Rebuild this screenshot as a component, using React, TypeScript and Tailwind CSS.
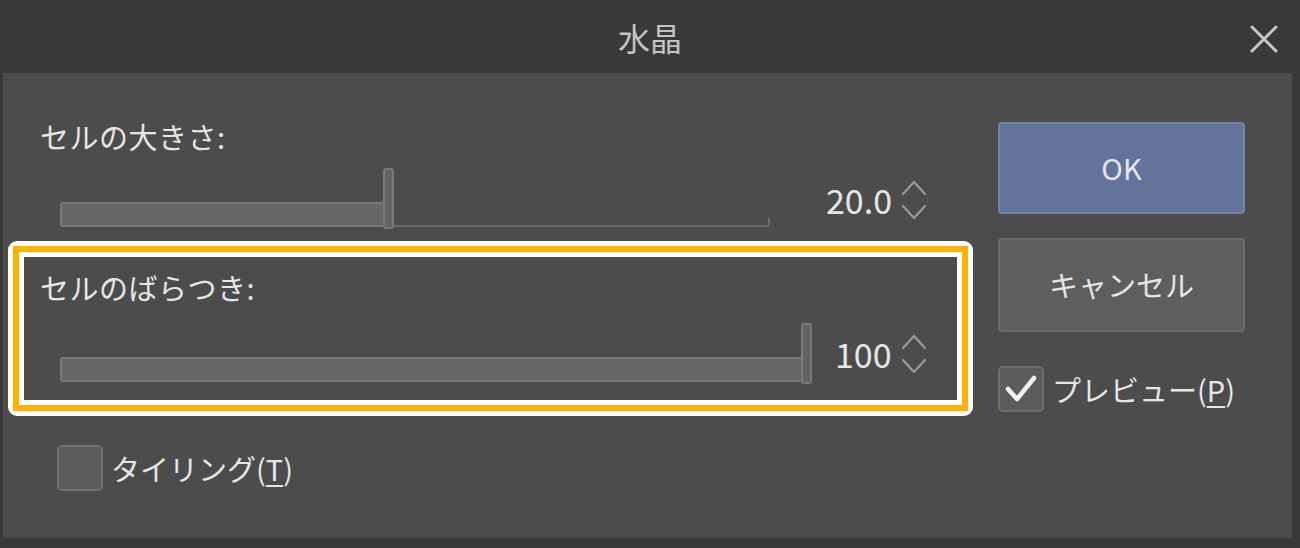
import React from "react";

const font = { fontFamily: '"Noto Sans CJK JP", "Noto Sans", sans-serif' };

function Spinner() {
  return (
    <svg width="26" height="40" viewBox="0 0 26 40" fill="none" stroke="#9a9a9a" strokeWidth={2.2} strokeLinecap="round" strokeLinejoin="round">
      <path d="M2 14 L13 2 L24 14" />
      <path d="M2 26 L13 38 L24 26" />
    </svg>
  );
}

function Slider({ width, fill, full }: { width: number; fill: number; full?: boolean }) {
  return (
    <div className="flex items-end" style={{ width }}>
      <div className="mb-[2px] h-[25px] rounded-l-[3px] border-2 border-r-0 border-[#787878] bg-[#676767]" style={{ width: fill }} />
      <div className="h-[61px] w-[11px] shrink-0 rounded-[3px] border-2 border-[#7a7a7a] bg-[#636363]" />
      {!full && <div className="mb-[2px] h-[9px] flex-1 rounded-br-[3px] border-b-2 border-r-2 border-[#6c6c6c]" />}
    </div>
  );
}

function Check({ checked }: { checked?: boolean }) {
  return (
    <div className="flex h-[46px] w-[46px] shrink-0 items-center justify-center rounded-[5px] border-2 border-[#6f6f6f] bg-[#5c5c5c]">
      {checked && (
        <svg width="34" height="30" viewBox="0 0 34 30" fill="none" stroke="#f2f2f2" strokeWidth={4.5} strokeLinecap="round" strokeLinejoin="round">
          <path d="M4 15 L13 25 L30 4" />
        </svg>
      )}
    </div>
  );
}

export default function App() {
  return (
    <div className="flex h-[548px] w-[1300px] flex-col bg-[#393939] text-[#e6e6e6]" style={font}>
      {/* Title bar */}
      <div className="relative flex h-[73px] items-center justify-center">
        <span className="text-[32px] text-[#c4c4c4]">水晶</span>
        <svg className="absolute left-[1249px] top-[24px]" width="30" height="30" viewBox="0 0 30 30" stroke="#c8c8c8" strokeWidth={3} strokeLinecap="round">
          <path d="M3 3 L27 27 M27 3 L3 27" />
        </svg>
      </div>

      {/* Body */}
      <div className="ml-[3px] flex h-[465px] w-[1289px] bg-[#4c4c4c]">
        {/* Left column */}
        <div className="flex w-[970px] flex-col pl-[5px]">
          {/* Cell size */}
          <div className="pl-[32px] pt-[45px]">
            <div className="text-[29px] leading-[36px] tracking-[0.5px]">セルの大きさ:</div>
            <div className="mt-[14px] flex items-center pl-[20px]">
              <Slider width={710} fill={323} />
              <div className="ml-[56px] flex items-center gap-[9px] pt-[2px]">
                <span className="text-[34px] leading-[40px]">20.0</span>
                <Spinner />
              </div>
            </div>
          </div>

          {/* Highlighted variation */}
          <div className="mt-[12px] h-[175px] w-[965px] rounded-[9px] border-[5px] border-white">
            <div className="h-full w-full border-[6px] border-[#ffb000]">
              <div className="h-full w-full border-[5px] border-white px-[16px] pt-[12px]">
                <div className="text-[29px] leading-[36px] tracking-[0.5px]">セルのばらつき:</div>
                <div className="mt-[18px] flex items-center pl-[20px]">
                  <Slider width={752} fill={741} full />
                  <div className="ml-[23px] flex items-center gap-[9px]">
                    <span className="text-[34px] leading-[40px]">100</span>
                    <Spinner />
                  </div>
                </div>
              </div>
            </div>
          </div>

          {/* Tiling */}
          <div className="mt-[29px] flex items-center gap-[8px] pl-[49px]">
            <Check />
            <span className="text-[29px] leading-[36px]">
              タイリング(<span className="underline underline-offset-4">T</span>)
            </span>
          </div>
        </div>

        {/* Right column */}
        <div className="flex flex-col pl-[25px] pt-[49px]">
          <button className="h-[92px] w-[247px] rounded-[4px] border-2 border-[#7484a8] bg-[#63739a] text-[29px] text-[#e4e8f2]">
            OK
          </button>
          <button className="mt-[24px] h-[94px] w-[247px] rounded-[4px] border-2 border-[#6c6c6c] bg-[#5e5e5e] text-[29px] text-[#e6e6e6]">
            キャンセル
          </button>
          <div className="mt-[34px] flex items-center gap-[8px]">
            <Check checked />
            <span className="text-[29px] leading-[36px]">
              プレビュー(<span className="underline underline-offset-4">P</span>)
            </span>
          </div>
        </div>
      </div>
    </div>
  );
}
